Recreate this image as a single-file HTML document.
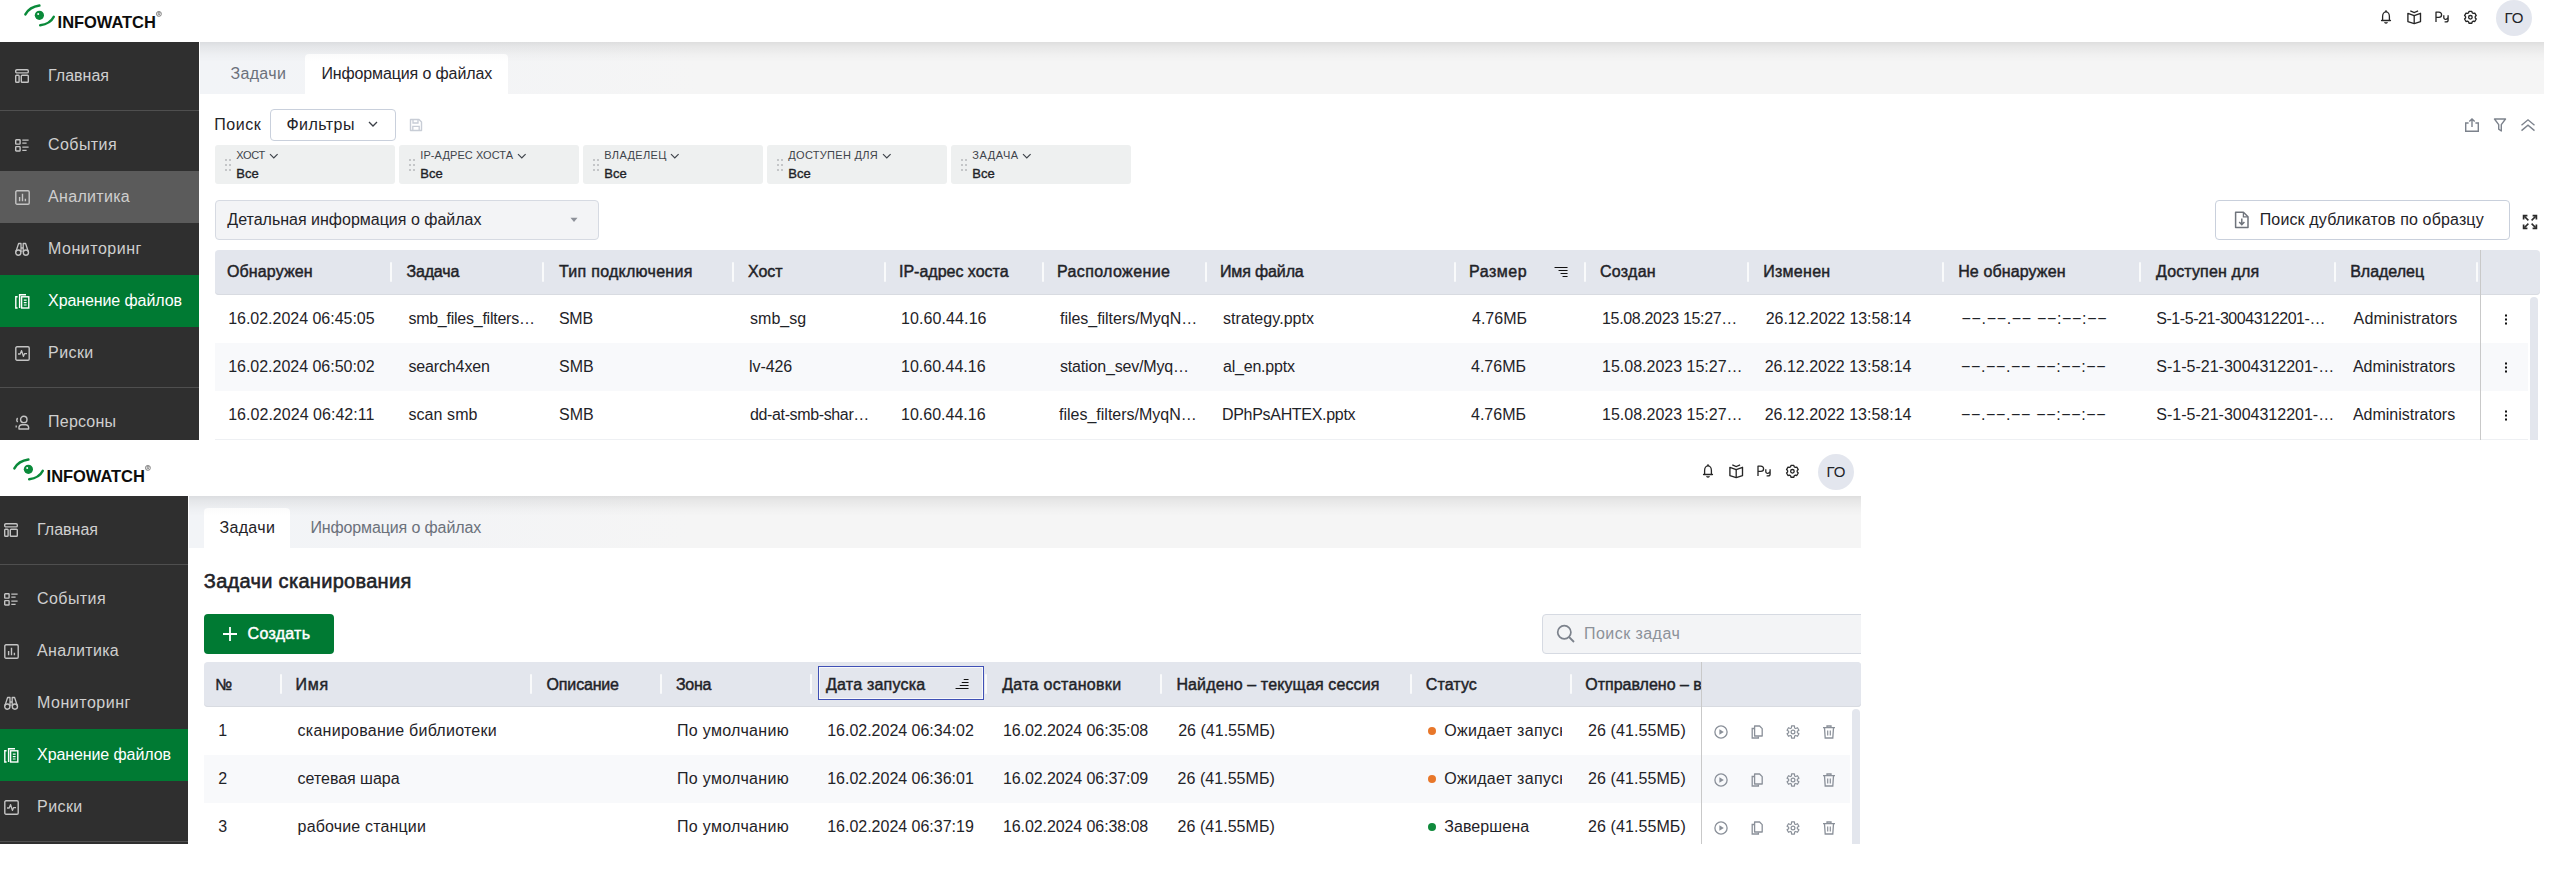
<!DOCTYPE html>
<html><head><meta charset="utf-8"><title>InfoWatch</title>
<style>
html,body{margin:0;padding:0;}
body{width:2549px;height:885px;position:relative;overflow:hidden;background:#fff;font-family:"Liberation Sans", sans-serif;-webkit-font-smoothing:antialiased;}
</style></head><body>
<div style="position:absolute;left:0px;top:0px;width:2544px;height:440px;overflow:hidden;background:#fff;"><div style="position:absolute;left:0px;top:0px;width:2544px;height:42px;background:#fff;"></div><svg style="position:absolute;left:20px;top:0px;" width="150" height="40" viewBox="0 0 150 40"><path d="M5.4 14.4 Q9.6 7 19.4 5.6" stroke="#0a8a3a" stroke-width="2.5" fill="none" stroke-linecap="round"/><circle cx="19.4" cy="15.3" r="4.6" fill="#0a8a3a"/><circle cx="18.2" cy="13.9" r="1.0" fill="#fff"/><path d="M20.2 25.3 Q30.2 24 33.8 16.8" stroke="#0a8a3a" stroke-width="2.5" fill="none" stroke-linecap="round"/><circle cx="138.9" cy="13.9" r="2.5" stroke="#444" stroke-width="0.6" fill="none"/><path d="M138.1 15.5 V12.4 H139.3 A0.8 0.8 0 0 1 139.3 14 H138.1 M139.1 14 L140 15.5" stroke="#444" stroke-width="0.5" fill="none"/></svg><div style="position:absolute;left:57.60px;top:13.93px;font-size:16.5px;line-height:16.5px;white-space:nowrap;color:#0d0d0d;font-weight:700;letter-spacing:-0.05px;">INFOWATCH</div><svg style="position:absolute;left:2379px;top:9px;" width="14" height="16" viewBox="0 0 14 16"><path d="M3.6 11.3 V7.4 C3.6 4.9 5.1 2.9 7 2.9 C8.9 2.9 10.4 4.9 10.4 7.4 V11.3" fill="none" stroke="#262626" stroke-width="1.3"/><path d="M2.6 11.5 H11.4" stroke="#262626" stroke-width="1.4" stroke-linecap="round"/><path d="M6.1 2.6 L7 1.4 L7.9 2.6 Z" fill="#262626" stroke="#262626" stroke-width="0.8"/><path d="M5.3 13.6 H8.7 L7 14.6 Z" fill="#262626" stroke="#262626" stroke-width="0.6" stroke-linejoin="round"/></svg><svg style="position:absolute;left:2407px;top:9px;" width="15" height="16" viewBox="0 0 15 16"><path d="M0.9 4.3 L7.2 6.6 L13.5 4.3 V12.6 L7.2 14.6 L0.9 12.6 Z" fill="none" stroke="#262626" stroke-width="1.35" stroke-linejoin="round"/><path d="M7.2 6.6 V14.4" stroke="#262626" stroke-width="1.3"/><path d="M3.3 1.9 L7.2 3.5 L11.1 1.9" fill="none" stroke="#262626" stroke-width="1.2"/></svg><svg style="position:absolute;left:2435px;top:10px;" width="15" height="14" viewBox="0 0 15 14"><path d="M1 11.9 V2.2 H3.8 C5.6 2.2 6.6 3.2 6.6 4.8 C6.6 6.4 5.6 7.4 3.8 7.4 H1" fill="none" stroke="#262626" stroke-width="1.3" stroke-linejoin="round"/><path d="M8.8 5.2 V7.6 C8.8 9 9.9 9.6 11 9.3 C12.2 9 13.1 8.2 13.1 7 M13.1 5.2 V10.2 C13.1 11.3 12.2 11.9 11 11.9 H9.6" fill="none" stroke="#262626" stroke-width="1.3"/></svg><svg style="position:absolute;left:2462.5px;top:9.5px;" width="15" height="15" viewBox="0 0 15 15"><path d="M5.60 2.74 L5.98 1.37 L8.82 1.37 L9.20 2.74 L9.78 3.18 L10.44 3.46 L11.82 3.10 L13.25 5.57 L12.25 6.58 L12.15 7.30 L12.25 8.02 L13.25 9.03 L11.82 11.50 L10.44 11.14 L9.78 11.42 L9.20 11.86 L8.82 13.23 L5.98 13.23 L5.60 11.86 L5.02 11.42 L4.36 11.14 L2.98 11.50 L1.55 9.03 L2.55 8.02 L2.65 7.30 L2.55 6.58 L1.55 5.57 L2.98 3.10 L4.36 3.46 L5.02 3.18 Z" fill="none" stroke="#262626" stroke-width="1.3" stroke-linejoin="round"/><circle cx="7.4" cy="7.3" r="1.8" fill="none" stroke="#262626" stroke-width="1.3"/></svg><div style="position:absolute;left:2496px;top:-0.5px;width:36px;height:36px;border-radius:50%;background:#e3e6ee;"></div><div style="position:absolute;left:2504.60px;top:10.10px;font-size:15px;line-height:15px;white-space:nowrap;color:#1f2328;">ГО</div><div style="position:absolute;left:0px;top:42px;width:199px;height:398px;background:#2f2f2f;"></div><div style="position:absolute;left:0px;top:110px;width:199px;height:1px;background:#4f4f4f;"></div><div style="position:absolute;left:0px;top:387px;width:199px;height:1px;background:#4f4f4f;"></div><div style="position:absolute;left:0px;top:171px;width:199px;height:52px;background:#5b5b5b;"></div><div style="position:absolute;left:0px;top:275px;width:199px;height:52px;background:#007a33;"></div><svg style="position:absolute;left:15px;top:68.5px;" width="15" height="15" viewBox="0 0 15 15"><rect x="0.7" y="0.7" width="12.6" height="3.2" rx="1.2" fill="none" stroke="#c4c4c4" stroke-width="1.4"/><rect x="0.7" y="6.3" width="3.4" height="7" rx="0.8" fill="none" stroke="#c4c4c4" stroke-width="1.4"/><rect x="6.3" y="6.3" width="7" height="7" rx="0.8" fill="none" stroke="#c4c4c4" stroke-width="1.4"/></svg><div style="position:absolute;left:48.10px;top:67.75px;font-size:16px;line-height:16px;white-space:nowrap;color:#cfcfcf;">Главная</div><svg style="position:absolute;left:15px;top:139px;" width="15" height="15" viewBox="0 0 15 15"><rect x="0.7" y="0.7" width="4.4" height="4.4" rx="0.6" fill="none" stroke="#c4c4c4" stroke-width="1.4"/><rect x="0.7" y="7.6" width="4.4" height="4.4" rx="0.6" fill="none" stroke="#c4c4c4" stroke-width="1.4"/><path d="M7.3 1.2 H13.6 M7.3 4.2 H11.6 M7.3 8.2 H13.6 M7.3 11.4 H11.6" stroke="#c4c4c4" stroke-width="1.3"/></svg><div style="position:absolute;left:48.10px;top:137.25px;font-size:16px;line-height:16px;white-space:nowrap;color:#cfcfcf;letter-spacing:0.4px;">События</div><svg style="position:absolute;left:15px;top:190px;" width="15" height="15" viewBox="0 0 15 15"><rect x="0.8" y="0.8" width="13.4" height="13.4" rx="1.2" fill="none" stroke="#c4c4c4" stroke-width="1.4"/><path d="M4.6 7 V11.3 M7.5 3.8 V11.3 M10.4 8.8 V11.3" stroke="#c4c4c4" stroke-width="1.4"/></svg><div style="position:absolute;left:48.10px;top:189.25px;font-size:16px;line-height:16px;white-space:nowrap;color:#cfcfcf;letter-spacing:0.3px;">Аналитика</div><svg style="position:absolute;left:15px;top:242px;" width="15" height="15" viewBox="0 0 15 15"><circle cx="3.3" cy="10.6" r="2.6" fill="none" stroke="#c4c4c4" stroke-width="1.4"/><circle cx="10.9" cy="10.6" r="2.6" fill="none" stroke="#c4c4c4" stroke-width="1.4"/><path d="M1 9.5 L3.6 1.5 H6 V10 M13.2 9.5 L10.6 1.5 H8.2 V10 M6 6 H8.2" fill="none" stroke="#c4c4c4" stroke-width="1.3" stroke-linejoin="round"/></svg><div style="position:absolute;left:48.10px;top:241.25px;font-size:16px;line-height:16px;white-space:nowrap;color:#cfcfcf;letter-spacing:0.5px;">Мониторинг</div><svg style="position:absolute;left:15px;top:294px;" width="15" height="15" viewBox="0 0 15 15"><path d="M2.6 14 H0.8 V2.8 H2.6" fill="none" stroke="#ffffff" stroke-width="1.4"/><path d="M4.6 14 V0.8 H11" fill="none" stroke="#ffffff" stroke-width="1.4"/><rect x="6.6" y="2.8" width="7.2" height="11.2" fill="none" stroke="#ffffff" stroke-width="1.4"/><path d="M8.8 6.2 H11.6 M8.8 8.6 H11.6 M8.8 11 H11.6" stroke="#ffffff" stroke-width="1.2"/></svg><div style="position:absolute;left:48.10px;top:293.25px;font-size:16px;line-height:16px;white-space:nowrap;color:#ffffff;letter-spacing:-0.1px;">Хранение файлов</div><svg style="position:absolute;left:15px;top:346px;" width="15" height="15" viewBox="0 0 15 15"><rect x="0.8" y="0.8" width="13.4" height="13.4" rx="1.2" fill="none" stroke="#c4c4c4" stroke-width="1.4"/><path d="M3 8 H5.2 L6.6 4.6 L8.4 10.4 L9.6 7.6 H12" fill="none" stroke="#c4c4c4" stroke-width="1.3" stroke-linejoin="round"/></svg><div style="position:absolute;left:48.10px;top:345.25px;font-size:16px;line-height:16px;white-space:nowrap;color:#cfcfcf;letter-spacing:0.4px;">Риски</div><svg style="position:absolute;left:15px;top:415px;" width="15" height="15" viewBox="0 0 15 15"><circle cx="8.8" cy="4.4" r="3.2" fill="none" stroke="#c4c4c4" stroke-width="1.4"/><path d="M4 14 V12.2 A3 3 0 0 1 7 9.8 H10.6 A3 3 0 0 1 13.6 12.2 V14 Z" fill="none" stroke="#c4c4c4" stroke-width="1.4" stroke-linejoin="round"/><path d="M2.6 3 A3.4 3.4 0 0 0 2.6 7.2" fill="none" stroke="#c4c4c4" stroke-width="1.3"/><path d="M1.2 10.6 V12.6" stroke="#c4c4c4" stroke-width="1.3"/></svg><div style="position:absolute;left:48.10px;top:414.25px;font-size:16px;line-height:16px;white-space:nowrap;color:#cfcfcf;letter-spacing:0.2px;">Персоны</div><div style="position:absolute;left:200px;top:42px;width:2344px;height:52px;background:linear-gradient(to right,#f2f4f7 0px,#f3f4f6 250px,#f5f5f5 500px);"></div><div style="position:absolute;left:200px;top:42px;width:2344px;height:20px;background:linear-gradient(to bottom,rgba(0,0,0,0.095),rgba(0,0,0,0.055) 5px,rgba(0,0,0,0.02) 13px,rgba(0,0,0,0));"></div><div style="position:absolute;left:305px;top:54px;width:203px;height:40px;background:linear-gradient(to bottom,#fbfbfb,#fff 8px);border-radius:4px 4px 0 0;"></div><div style="position:absolute;left:230.40px;top:66.45px;font-size:16px;line-height:16px;white-space:nowrap;color:#6b717b;letter-spacing:0.35px;">Задачи</div><div style="position:absolute;left:321.40px;top:66.45px;font-size:16px;line-height:16px;white-space:nowrap;color:#1f2328;letter-spacing:-0.12px;">Информация о файлах</div><div style="position:absolute;left:199px;top:42px;width:1px;height:398px;background:#fff;"></div><div style="position:absolute;left:214.30px;top:116.65px;font-size:16px;line-height:16px;white-space:nowrap;color:#1f2328;letter-spacing:0.55px;">Поиск</div><div style="position:absolute;left:270px;top:109px;width:124px;height:30px;border:1px solid #c9d0dc;border-radius:4px;background:#fff;"></div><div style="position:absolute;left:286.50px;top:116.65px;font-size:16px;line-height:16px;white-space:nowrap;color:#1f2328;letter-spacing:0.45px;">Фильтры</div><svg style="position:absolute;left:368px;top:121px;" width="10" height="7" viewBox="0 0 10 7"><path d="M1 1 L5 5 L9 1" fill="none" stroke="#3a3f46" stroke-width="1.3"/></svg><svg style="position:absolute;left:409px;top:118px;" width="14" height="14" viewBox="0 0 14 14"><path d="M1.5 1.5 H10 L12.5 4 V12.5 H1.5 Z" fill="none" stroke="#c8cdd6" stroke-width="1.4" stroke-linejoin="round"/><path d="M4 1.5 V5 H9 V1.5 M3.8 12.5 V8.4 H10.2 V12.5" fill="none" stroke="#c8cdd6" stroke-width="1.3"/></svg><svg style="position:absolute;left:2464px;top:117px;" width="16" height="16" viewBox="0 0 16 16"><path d="M4.6 6 H1.7 V14.3 H14.3 V6 H11.4" fill="none" stroke="#7c828c" stroke-width="1.4"/><path d="M8 10 V2 M5.3 4.6 L8 1.9 L10.7 4.6" fill="none" stroke="#7c828c" stroke-width="1.4"/></svg><svg style="position:absolute;left:2493px;top:117px;" width="14" height="16" viewBox="0 0 14 16"><path d="M1.5 2 H12.5 L8.3 7.6 V14 L5.7 12.2 V7.6 Z" fill="none" stroke="#7c828c" stroke-width="1.4" stroke-linejoin="round"/></svg><svg style="position:absolute;left:2520px;top:118px;" width="16" height="14" viewBox="0 0 16 14"><path d="M1.5 7.2 L8 1.8 L14.5 7.2 M1.5 12.6 L8 7.2 L14.5 12.6" fill="none" stroke="#7c828c" stroke-width="1.4"/></svg><div style="position:absolute;left:215px;top:145px;width:180px;height:39px;background:#eef0f0;border-radius:3px;"></div><svg style="position:absolute;left:225px;top:159px;" width="6" height="12" viewBox="0 0 6 12"><rect x="0" y="0" width="2" height="2" fill="#c4c6c8"/><rect x="0" y="5" width="2" height="2" fill="#c4c6c8"/><rect x="0" y="10" width="2" height="2" fill="#c4c6c8"/><rect x="4" y="0" width="2" height="2" fill="#c4c6c8"/><rect x="4" y="5" width="2" height="2" fill="#c4c6c8"/><rect x="4" y="10" width="2" height="2" fill="#c4c6c8"/></svg><div style="position:absolute;left:236.3px;top:149.69px;font-size:11px;line-height:11px;white-space:nowrap;color:#3f444b;letter-spacing:-0.27px;">ХОСТ<svg style="margin-left:4.27px;vertical-align:-1px" width="10" height="7" viewBox="0 0 10 7"><path d="M1 1.2 L4.8 5 L8.6 1.2" fill="none" stroke="#3f444b" stroke-width="1.2"/></svg></div><div style="position:absolute;left:236.30px;top:166.99px;font-size:13px;line-height:13px;white-space:nowrap;color:#1f2328;-webkit-text-stroke:0.36px #1f2328;">Все</div><div style="position:absolute;left:399px;top:145px;width:180px;height:39px;background:#eef0f0;border-radius:3px;"></div><svg style="position:absolute;left:409px;top:159px;" width="6" height="12" viewBox="0 0 6 12"><rect x="0" y="0" width="2" height="2" fill="#c4c6c8"/><rect x="0" y="5" width="2" height="2" fill="#c4c6c8"/><rect x="0" y="10" width="2" height="2" fill="#c4c6c8"/><rect x="4" y="0" width="2" height="2" fill="#c4c6c8"/><rect x="4" y="5" width="2" height="2" fill="#c4c6c8"/><rect x="4" y="10" width="2" height="2" fill="#c4c6c8"/></svg><div style="position:absolute;left:420.3px;top:149.69px;font-size:11px;line-height:11px;white-space:nowrap;color:#3f444b;letter-spacing:0.09px;">IP-АДРЕС ХОСТА<svg style="margin-left:3.91px;vertical-align:-1px" width="10" height="7" viewBox="0 0 10 7"><path d="M1 1.2 L4.8 5 L8.6 1.2" fill="none" stroke="#3f444b" stroke-width="1.2"/></svg></div><div style="position:absolute;left:420.30px;top:166.99px;font-size:13px;line-height:13px;white-space:nowrap;color:#1f2328;-webkit-text-stroke:0.36px #1f2328;">Все</div><div style="position:absolute;left:583px;top:145px;width:180px;height:39px;background:#eef0f0;border-radius:3px;"></div><svg style="position:absolute;left:593px;top:159px;" width="6" height="12" viewBox="0 0 6 12"><rect x="0" y="0" width="2" height="2" fill="#c4c6c8"/><rect x="0" y="5" width="2" height="2" fill="#c4c6c8"/><rect x="0" y="10" width="2" height="2" fill="#c4c6c8"/><rect x="4" y="0" width="2" height="2" fill="#c4c6c8"/><rect x="4" y="5" width="2" height="2" fill="#c4c6c8"/><rect x="4" y="10" width="2" height="2" fill="#c4c6c8"/></svg><div style="position:absolute;left:604.3px;top:149.69px;font-size:11px;line-height:11px;white-space:nowrap;color:#3f444b;letter-spacing:0.36px;">ВЛАДЕЛЕЦ<svg style="margin-left:3.64px;vertical-align:-1px" width="10" height="7" viewBox="0 0 10 7"><path d="M1 1.2 L4.8 5 L8.6 1.2" fill="none" stroke="#3f444b" stroke-width="1.2"/></svg></div><div style="position:absolute;left:604.30px;top:166.99px;font-size:13px;line-height:13px;white-space:nowrap;color:#1f2328;-webkit-text-stroke:0.36px #1f2328;">Все</div><div style="position:absolute;left:767px;top:145px;width:180px;height:39px;background:#eef0f0;border-radius:3px;"></div><svg style="position:absolute;left:777px;top:159px;" width="6" height="12" viewBox="0 0 6 12"><rect x="0" y="0" width="2" height="2" fill="#c4c6c8"/><rect x="0" y="5" width="2" height="2" fill="#c4c6c8"/><rect x="0" y="10" width="2" height="2" fill="#c4c6c8"/><rect x="4" y="0" width="2" height="2" fill="#c4c6c8"/><rect x="4" y="5" width="2" height="2" fill="#c4c6c8"/><rect x="4" y="10" width="2" height="2" fill="#c4c6c8"/></svg><div style="position:absolute;left:788.3px;top:149.69px;font-size:11px;line-height:11px;white-space:nowrap;color:#3f444b;letter-spacing:0.3px;">ДОСТУПЕН ДЛЯ<svg style="margin-left:3.70px;vertical-align:-1px" width="10" height="7" viewBox="0 0 10 7"><path d="M1 1.2 L4.8 5 L8.6 1.2" fill="none" stroke="#3f444b" stroke-width="1.2"/></svg></div><div style="position:absolute;left:788.30px;top:166.99px;font-size:13px;line-height:13px;white-space:nowrap;color:#1f2328;-webkit-text-stroke:0.36px #1f2328;">Все</div><div style="position:absolute;left:951px;top:145px;width:180px;height:39px;background:#eef0f0;border-radius:3px;"></div><svg style="position:absolute;left:961px;top:159px;" width="6" height="12" viewBox="0 0 6 12"><rect x="0" y="0" width="2" height="2" fill="#c4c6c8"/><rect x="0" y="5" width="2" height="2" fill="#c4c6c8"/><rect x="0" y="10" width="2" height="2" fill="#c4c6c8"/><rect x="4" y="0" width="2" height="2" fill="#c4c6c8"/><rect x="4" y="5" width="2" height="2" fill="#c4c6c8"/><rect x="4" y="10" width="2" height="2" fill="#c4c6c8"/></svg><div style="position:absolute;left:972.3px;top:149.69px;font-size:11px;line-height:11px;white-space:nowrap;color:#3f444b;letter-spacing:0.58px;">ЗАДАЧА<svg style="margin-left:3.42px;vertical-align:-1px" width="10" height="7" viewBox="0 0 10 7"><path d="M1 1.2 L4.8 5 L8.6 1.2" fill="none" stroke="#3f444b" stroke-width="1.2"/></svg></div><div style="position:absolute;left:972.30px;top:166.99px;font-size:13px;line-height:13px;white-space:nowrap;color:#1f2328;-webkit-text-stroke:0.36px #1f2328;">Все</div><div style="position:absolute;left:215px;top:200px;width:382px;height:38px;background:#f3f4f6;border:1px solid #d6dae2;border-radius:4px;"></div><div style="position:absolute;left:227.30px;top:212.45px;font-size:16px;line-height:16px;white-space:nowrap;color:#1f2328;">Детальная информация о файлах</div><svg style="position:absolute;left:570px;top:217px;" width="8" height="6" viewBox="0 0 8 6"><path d="M0.5 0.8 H7.5 L4 5 Z" fill="#8d9199"/></svg><div style="position:absolute;left:2215px;top:200px;width:293px;height:38px;border:1px solid #c9d0dc;border-radius:4px;background:#fff;"></div><svg style="position:absolute;left:2234px;top:211px;" width="16" height="18" viewBox="0 0 16 18"><path d="M1.6 1.2 H9.4 L14 5.8 V16.6 H1.6 Z" fill="none" stroke="#6f747c" stroke-width="1.5" stroke-linejoin="round"/><path d="M9.4 1.2 V5.8 H14" fill="none" stroke="#6f747c" stroke-width="1.3"/><path d="M7.8 7.5 V13.5 M5.2 11 L7.8 13.6 L10.4 11" fill="none" stroke="#6f747c" stroke-width="1.5"/></svg><div style="position:absolute;left:2259.70px;top:212.45px;font-size:16px;line-height:16px;white-space:nowrap;color:#1f2328;letter-spacing:0.15px;">Поиск дубликатов по образцу</div><svg style="position:absolute;left:2522px;top:214px;" width="16" height="16" viewBox="0 0 16 16"><path d="M1.6 5.4 V1.6 H5.4 M10.6 1.6 H14.4 V5.4 M14.4 10.6 V14.4 H10.6 M5.4 14.4 H1.6 V10.6" fill="none" stroke="#2b2b2b" stroke-width="1.7" stroke-linejoin="miter"/><path d="M2.4 2.4 L6.4 6.4 M13.6 2.4 L9.6 6.4 M13.6 13.6 L9.6 9.6 M2.4 13.6 L6.4 9.6" stroke="#2b2b2b" stroke-width="1.5"/></svg><div style="position:absolute;left:215px;top:250px;width:2325px;height:45px;background:#e3e6ed;border-radius:4px;box-shadow:inset 0 -1px 0 #d8dbe1;"></div><div style="position:absolute;left:390px;top:262px;width:2px;height:20px;background:#f9fafb;border-radius:1px;"></div><div style="position:absolute;left:542px;top:262px;width:2px;height:20px;background:#f9fafb;border-radius:1px;"></div><div style="position:absolute;left:732px;top:262px;width:2px;height:20px;background:#f9fafb;border-radius:1px;"></div><div style="position:absolute;left:884px;top:262px;width:2px;height:20px;background:#f9fafb;border-radius:1px;"></div><div style="position:absolute;left:1042px;top:262px;width:2px;height:20px;background:#f9fafb;border-radius:1px;"></div><div style="position:absolute;left:1205px;top:262px;width:2px;height:20px;background:#f9fafb;border-radius:1px;"></div><div style="position:absolute;left:1454px;top:262px;width:2px;height:20px;background:#f9fafb;border-radius:1px;"></div><div style="position:absolute;left:1584px;top:262px;width:2px;height:20px;background:#f9fafb;border-radius:1px;"></div><div style="position:absolute;left:1747px;top:262px;width:2px;height:20px;background:#f9fafb;border-radius:1px;"></div><div style="position:absolute;left:1942px;top:262px;width:2px;height:20px;background:#f9fafb;border-radius:1px;"></div><div style="position:absolute;left:2139px;top:262px;width:2px;height:20px;background:#f9fafb;border-radius:1px;"></div><div style="position:absolute;left:2334px;top:262px;width:2px;height:20px;background:#f9fafb;border-radius:1px;"></div><div style="position:absolute;left:2476px;top:262px;width:2px;height:20px;background:#f9fafb;border-radius:1px;"></div><div style="position:absolute;left:227.00px;top:263.75px;font-size:16px;line-height:16px;white-space:nowrap;color:#1f2328;-webkit-text-stroke:0.45px #1f2328;letter-spacing:0.114px;">Обнаружен</div><div style="position:absolute;left:406.40px;top:263.75px;font-size:16px;line-height:16px;white-space:nowrap;color:#1f2328;-webkit-text-stroke:0.45px #1f2328;letter-spacing:-0.14px;">Задача</div><div style="position:absolute;left:559.00px;top:263.75px;font-size:16px;line-height:16px;white-space:nowrap;color:#1f2328;-webkit-text-stroke:0.45px #1f2328;letter-spacing:0.271px;">Тип подключения</div><div style="position:absolute;left:748.00px;top:263.75px;font-size:16px;line-height:16px;white-space:nowrap;color:#1f2328;-webkit-text-stroke:0.45px #1f2328;letter-spacing:-0.066px;">Хост</div><div style="position:absolute;left:899.00px;top:263.75px;font-size:16px;line-height:16px;white-space:nowrap;color:#1f2328;-webkit-text-stroke:0.45px #1f2328;letter-spacing:-0.008px;">IP-адрес хоста</div><div style="position:absolute;left:1057.00px;top:263.75px;font-size:16px;line-height:16px;white-space:nowrap;color:#1f2328;-webkit-text-stroke:0.45px #1f2328;letter-spacing:0.373px;">Расположение</div><div style="position:absolute;left:1220.00px;top:263.75px;font-size:16px;line-height:16px;white-space:nowrap;color:#1f2328;-webkit-text-stroke:0.45px #1f2328;letter-spacing:-0.139px;">Имя файла</div><div style="position:absolute;left:1469.00px;top:263.75px;font-size:16px;line-height:16px;white-space:nowrap;color:#1f2328;-webkit-text-stroke:0.45px #1f2328;letter-spacing:0.52px;">Размер</div><div style="position:absolute;left:1600.00px;top:263.75px;font-size:16px;line-height:16px;white-space:nowrap;color:#1f2328;-webkit-text-stroke:0.45px #1f2328;letter-spacing:0.26px;">Создан</div><div style="position:absolute;left:1763.20px;top:263.75px;font-size:16px;line-height:16px;white-space:nowrap;color:#1f2328;-webkit-text-stroke:0.45px #1f2328;letter-spacing:0.283px;">Изменен</div><div style="position:absolute;left:1958.20px;top:263.75px;font-size:16px;line-height:16px;white-space:nowrap;color:#1f2328;-webkit-text-stroke:0.45px #1f2328;letter-spacing:0.118px;">Не обнаружен</div><div style="position:absolute;left:2156.00px;top:263.75px;font-size:16px;line-height:16px;white-space:nowrap;color:#1f2328;-webkit-text-stroke:0.45px #1f2328;letter-spacing:0.136px;">Доступен для</div><div style="position:absolute;left:2350.20px;top:263.75px;font-size:16px;line-height:16px;white-space:nowrap;color:#1f2328;-webkit-text-stroke:0.45px #1f2328;letter-spacing:-0.014px;">Владелец</div><svg style="position:absolute;left:1554px;top:266px;" width="14" height="12" viewBox="0 0 14 12"><path d="M1 1.5 H13.1 M5 4.5 H13.1 M7 7.5 H13.1 M9 10.5 H13.1" stroke="#111" stroke-width="1.2" stroke-linecap="round"/></svg><div style="position:absolute;left:215px;top:343px;width:2313px;height:48px;background:#f8f9fb;"></div><div style="position:absolute;left:215px;top:439px;width:2313px;height:1px;background:#eef0f3;"></div><div style="position:absolute;left:228.20px;top:310.85px;font-size:16px;line-height:16px;white-space:nowrap;color:#1f2328;letter-spacing:-0.022px;">16.02.2024 06:45:05</div><div style="position:absolute;left:408.40px;top:310.85px;font-size:16px;line-height:16px;white-space:nowrap;color:#1f2328;letter-spacing:-0.248px;">smb_files_filters…</div><div style="position:absolute;left:559.00px;top:310.85px;font-size:16px;line-height:16px;white-space:nowrap;color:#1f2328;letter-spacing:-0.3px;">SMB</div><div style="position:absolute;left:750.00px;top:310.85px;font-size:16px;line-height:16px;white-space:nowrap;color:#1f2328;letter-spacing:0.04px;">smb_sg</div><div style="position:absolute;left:901.00px;top:310.85px;font-size:16px;line-height:16px;white-space:nowrap;color:#1f2328;letter-spacing:0.1px;">10.60.44.16</div><div style="position:absolute;left:1060.00px;top:310.85px;font-size:16px;line-height:16px;white-space:nowrap;color:#1f2328;letter-spacing:-0.033px;">files_filters/MyqN…</div><div style="position:absolute;left:1223.00px;top:310.85px;font-size:16px;line-height:16px;white-space:nowrap;color:#1f2328;letter-spacing:0.051px;">strategy.pptx</div><div style="position:absolute;left:1472.00px;top:310.85px;font-size:16px;line-height:16px;white-space:nowrap;color:#1f2328;">4.76МБ</div><div style="position:absolute;left:1602.00px;top:310.85px;font-size:16px;line-height:16px;white-space:nowrap;color:#1f2328;letter-spacing:-0.331px;">15.08.2023 15:27…</div><div style="position:absolute;left:1765.80px;top:310.85px;font-size:16px;line-height:16px;white-space:nowrap;color:#1f2328;letter-spacing:-0.077px;">26.12.2022 13:58:14</div><div style="position:absolute;left:1961.60px;top:310.85px;font-size:16px;line-height:16px;white-space:nowrap;color:#1f2328;letter-spacing:0.663px;">−−.−−.−− −−:−−:−−</div><div style="position:absolute;left:2156.20px;top:310.85px;font-size:16px;line-height:16px;white-space:nowrap;color:#1f2328;letter-spacing:-0.43px;">S-1-5-21-3004312201-…</div><div style="position:absolute;left:2353.60px;top:310.85px;font-size:16px;line-height:16px;white-space:nowrap;color:#1f2328;letter-spacing:0.115px;">Administrators</div><svg style="position:absolute;left:2504px;top:314px;" width="4" height="12" viewBox="0 0 4 12"><rect x="1" y="0.5" width="2" height="2" fill="#111"/><rect x="1" y="4.5" width="2" height="2" fill="#111"/><rect x="1" y="8.5" width="2" height="2" fill="#111"/></svg><div style="position:absolute;left:228.20px;top:358.85px;font-size:16px;line-height:16px;white-space:nowrap;color:#1f2328;letter-spacing:-0.022px;">16.02.2024 06:50:02</div><div style="position:absolute;left:408.40px;top:358.85px;font-size:16px;line-height:16px;white-space:nowrap;color:#1f2328;letter-spacing:-0.133px;">search4xen</div><div style="position:absolute;left:559.00px;top:358.85px;font-size:16px;line-height:16px;white-space:nowrap;color:#1f2328;">SMB</div><div style="position:absolute;left:749.00px;top:358.85px;font-size:16px;line-height:16px;white-space:nowrap;color:#1f2328;letter-spacing:-0.08px;">lv-426</div><div style="position:absolute;left:901.00px;top:358.85px;font-size:16px;line-height:16px;white-space:nowrap;color:#1f2328;">10.60.44.16</div><div style="position:absolute;left:1060.00px;top:358.85px;font-size:16px;line-height:16px;white-space:nowrap;color:#1f2328;letter-spacing:-0.173px;">station_sev/Myq…</div><div style="position:absolute;left:1223.00px;top:358.85px;font-size:16px;line-height:16px;white-space:nowrap;color:#1f2328;letter-spacing:-0.211px;">al_en.pptx</div><div style="position:absolute;left:1471.00px;top:358.85px;font-size:16px;line-height:16px;white-space:nowrap;color:#1f2328;">4.76МБ</div><div style="position:absolute;left:1602.00px;top:358.85px;font-size:16px;line-height:16px;white-space:nowrap;color:#1f2328;">15.08.2023 15:27…</div><div style="position:absolute;left:1764.70px;top:358.85px;font-size:16px;line-height:16px;white-space:nowrap;color:#1f2328;">26.12.2022 13:58:14</div><div style="position:absolute;left:1960.90px;top:358.85px;font-size:16px;line-height:16px;white-space:nowrap;color:#1f2328;letter-spacing:0.65px;">−−.−−.−− −−:−−:−−</div><div style="position:absolute;left:2156.30px;top:358.85px;font-size:16px;line-height:16px;white-space:nowrap;color:#1f2328;">S-1-5-21-3004312201-…</div><div style="position:absolute;left:2352.90px;top:358.85px;font-size:16px;line-height:16px;white-space:nowrap;color:#1f2328;">Administrators</div><svg style="position:absolute;left:2504px;top:362px;" width="4" height="12" viewBox="0 0 4 12"><rect x="1" y="0.5" width="2" height="2" fill="#111"/><rect x="1" y="4.5" width="2" height="2" fill="#111"/><rect x="1" y="8.5" width="2" height="2" fill="#111"/></svg><div style="position:absolute;left:228.20px;top:406.85px;font-size:16px;line-height:16px;white-space:nowrap;color:#1f2328;letter-spacing:0.033px;">16.02.2024 06:42:11</div><div style="position:absolute;left:408.40px;top:406.85px;font-size:16px;line-height:16px;white-space:nowrap;color:#1f2328;letter-spacing:0.087px;">scan smb</div><div style="position:absolute;left:559.00px;top:406.85px;font-size:16px;line-height:16px;white-space:nowrap;color:#1f2328;">SMB</div><div style="position:absolute;left:750.00px;top:406.85px;font-size:16px;line-height:16px;white-space:nowrap;color:#1f2328;letter-spacing:-0.365px;">dd-at-smb-shar…</div><div style="position:absolute;left:901.00px;top:406.85px;font-size:16px;line-height:16px;white-space:nowrap;color:#1f2328;">10.60.44.16</div><div style="position:absolute;left:1059.00px;top:406.85px;font-size:16px;line-height:16px;white-space:nowrap;color:#1f2328;">files_filters/MyqN…</div><div style="position:absolute;left:1222.00px;top:406.85px;font-size:16px;line-height:16px;white-space:nowrap;color:#1f2328;letter-spacing:-0.307px;">DPhPsAHTEX.pptx</div><div style="position:absolute;left:1471.00px;top:406.85px;font-size:16px;line-height:16px;white-space:nowrap;color:#1f2328;">4.76МБ</div><div style="position:absolute;left:1602.00px;top:406.85px;font-size:16px;line-height:16px;white-space:nowrap;color:#1f2328;">15.08.2023 15:27…</div><div style="position:absolute;left:1764.70px;top:406.85px;font-size:16px;line-height:16px;white-space:nowrap;color:#1f2328;">26.12.2022 13:58:14</div><div style="position:absolute;left:1960.90px;top:406.85px;font-size:16px;line-height:16px;white-space:nowrap;color:#1f2328;letter-spacing:0.65px;">−−.−−.−− −−:−−:−−</div><div style="position:absolute;left:2156.30px;top:406.85px;font-size:16px;line-height:16px;white-space:nowrap;color:#1f2328;">S-1-5-21-3004312201-…</div><div style="position:absolute;left:2352.90px;top:406.85px;font-size:16px;line-height:16px;white-space:nowrap;color:#1f2328;">Administrators</div><svg style="position:absolute;left:2504px;top:410px;" width="4" height="12" viewBox="0 0 4 12"><rect x="1" y="0.5" width="2" height="2" fill="#111"/><rect x="1" y="4.5" width="2" height="2" fill="#111"/><rect x="1" y="8.5" width="2" height="2" fill="#111"/></svg><div style="position:absolute;left:2480px;top:250px;width:1px;height:190px;background:#c9c9c9;"></div><div style="position:absolute;left:2530px;top:297px;width:8px;height:150px;background:#e3e6ed;border-radius:4px;"></div></div><div style="position:absolute;left:-11px;top:454px;width:1872px;height:390px;overflow:hidden;background:#fff;"><div style="position:absolute;left:0px;top:0px;width:1872px;height:42px;background:#fff;"></div><svg style="position:absolute;left:20px;top:0px;" width="150" height="40" viewBox="0 0 150 40"><path d="M5.4 14.4 Q9.6 7 19.4 5.6" stroke="#0a8a3a" stroke-width="2.5" fill="none" stroke-linecap="round"/><circle cx="19.4" cy="15.3" r="4.6" fill="#0a8a3a"/><circle cx="18.2" cy="13.9" r="1.0" fill="#fff"/><path d="M20.2 25.3 Q30.2 24 33.8 16.8" stroke="#0a8a3a" stroke-width="2.5" fill="none" stroke-linecap="round"/><circle cx="138.9" cy="13.9" r="2.5" stroke="#444" stroke-width="0.6" fill="none"/><path d="M138.1 15.5 V12.4 H139.3 A0.8 0.8 0 0 1 139.3 14 H138.1 M139.1 14 L140 15.5" stroke="#444" stroke-width="0.5" fill="none"/></svg><div style="position:absolute;left:57.60px;top:13.93px;font-size:16.5px;line-height:16.5px;white-space:nowrap;color:#0d0d0d;font-weight:700;letter-spacing:-0.05px;">INFOWATCH</div><svg style="position:absolute;left:1712px;top:9px;" width="14" height="16" viewBox="0 0 14 16"><path d="M3.6 11.3 V7.4 C3.6 4.9 5.1 2.9 7 2.9 C8.9 2.9 10.4 4.9 10.4 7.4 V11.3" fill="none" stroke="#262626" stroke-width="1.3"/><path d="M2.6 11.5 H11.4" stroke="#262626" stroke-width="1.4" stroke-linecap="round"/><path d="M6.1 2.6 L7 1.4 L7.9 2.6 Z" fill="#262626" stroke="#262626" stroke-width="0.8"/><path d="M5.3 13.6 H8.7 L7 14.6 Z" fill="#262626" stroke="#262626" stroke-width="0.6" stroke-linejoin="round"/></svg><svg style="position:absolute;left:1740px;top:9px;" width="15" height="16" viewBox="0 0 15 16"><path d="M0.9 4.3 L7.2 6.6 L13.5 4.3 V12.6 L7.2 14.6 L0.9 12.6 Z" fill="none" stroke="#262626" stroke-width="1.35" stroke-linejoin="round"/><path d="M7.2 6.6 V14.4" stroke="#262626" stroke-width="1.3"/><path d="M3.3 1.9 L7.2 3.5 L11.1 1.9" fill="none" stroke="#262626" stroke-width="1.2"/></svg><svg style="position:absolute;left:1768px;top:10px;" width="15" height="14" viewBox="0 0 15 14"><path d="M1 11.9 V2.2 H3.8 C5.6 2.2 6.6 3.2 6.6 4.8 C6.6 6.4 5.6 7.4 3.8 7.4 H1" fill="none" stroke="#262626" stroke-width="1.3" stroke-linejoin="round"/><path d="M8.8 5.2 V7.6 C8.8 9 9.9 9.6 11 9.3 C12.2 9 13.1 8.2 13.1 7 M13.1 5.2 V10.2 C13.1 11.3 12.2 11.9 11 11.9 H9.6" fill="none" stroke="#262626" stroke-width="1.3"/></svg><svg style="position:absolute;left:1795.5px;top:9.5px;" width="15" height="15" viewBox="0 0 15 15"><path d="M5.60 2.74 L5.98 1.37 L8.82 1.37 L9.20 2.74 L9.78 3.18 L10.44 3.46 L11.82 3.10 L13.25 5.57 L12.25 6.58 L12.15 7.30 L12.25 8.02 L13.25 9.03 L11.82 11.50 L10.44 11.14 L9.78 11.42 L9.20 11.86 L8.82 13.23 L5.98 13.23 L5.60 11.86 L5.02 11.42 L4.36 11.14 L2.98 11.50 L1.55 9.03 L2.55 8.02 L2.65 7.30 L2.55 6.58 L1.55 5.57 L2.98 3.10 L4.36 3.46 L5.02 3.18 Z" fill="none" stroke="#262626" stroke-width="1.3" stroke-linejoin="round"/><circle cx="7.4" cy="7.3" r="1.8" fill="none" stroke="#262626" stroke-width="1.3"/></svg><div style="position:absolute;left:1829px;top:-0.5px;width:36px;height:36px;border-radius:50%;background:#e3e6ee;"></div><div style="position:absolute;left:1837.60px;top:10.10px;font-size:15px;line-height:15px;white-space:nowrap;color:#1f2328;">ГО</div><div style="position:absolute;left:0px;top:42px;width:199px;height:348px;background:#2f2f2f;"></div><div style="position:absolute;left:0px;top:110px;width:199px;height:1px;background:#4f4f4f;"></div><div style="position:absolute;left:0px;top:387px;width:199px;height:1px;background:#4f4f4f;"></div><div style="position:absolute;left:0px;top:275px;width:199px;height:52px;background:#007a33;"></div><svg style="position:absolute;left:15px;top:68.5px;" width="15" height="15" viewBox="0 0 15 15"><rect x="0.7" y="0.7" width="12.6" height="3.2" rx="1.2" fill="none" stroke="#c4c4c4" stroke-width="1.4"/><rect x="0.7" y="6.3" width="3.4" height="7" rx="0.8" fill="none" stroke="#c4c4c4" stroke-width="1.4"/><rect x="6.3" y="6.3" width="7" height="7" rx="0.8" fill="none" stroke="#c4c4c4" stroke-width="1.4"/></svg><div style="position:absolute;left:48.10px;top:67.75px;font-size:16px;line-height:16px;white-space:nowrap;color:#cfcfcf;">Главная</div><svg style="position:absolute;left:15px;top:139px;" width="15" height="15" viewBox="0 0 15 15"><rect x="0.7" y="0.7" width="4.4" height="4.4" rx="0.6" fill="none" stroke="#c4c4c4" stroke-width="1.4"/><rect x="0.7" y="7.6" width="4.4" height="4.4" rx="0.6" fill="none" stroke="#c4c4c4" stroke-width="1.4"/><path d="M7.3 1.2 H13.6 M7.3 4.2 H11.6 M7.3 8.2 H13.6 M7.3 11.4 H11.6" stroke="#c4c4c4" stroke-width="1.3"/></svg><div style="position:absolute;left:48.10px;top:137.25px;font-size:16px;line-height:16px;white-space:nowrap;color:#cfcfcf;letter-spacing:0.4px;">События</div><svg style="position:absolute;left:15px;top:190px;" width="15" height="15" viewBox="0 0 15 15"><rect x="0.8" y="0.8" width="13.4" height="13.4" rx="1.2" fill="none" stroke="#c4c4c4" stroke-width="1.4"/><path d="M4.6 7 V11.3 M7.5 3.8 V11.3 M10.4 8.8 V11.3" stroke="#c4c4c4" stroke-width="1.4"/></svg><div style="position:absolute;left:48.10px;top:189.25px;font-size:16px;line-height:16px;white-space:nowrap;color:#cfcfcf;letter-spacing:0.3px;">Аналитика</div><svg style="position:absolute;left:15px;top:242px;" width="15" height="15" viewBox="0 0 15 15"><circle cx="3.3" cy="10.6" r="2.6" fill="none" stroke="#c4c4c4" stroke-width="1.4"/><circle cx="10.9" cy="10.6" r="2.6" fill="none" stroke="#c4c4c4" stroke-width="1.4"/><path d="M1 9.5 L3.6 1.5 H6 V10 M13.2 9.5 L10.6 1.5 H8.2 V10 M6 6 H8.2" fill="none" stroke="#c4c4c4" stroke-width="1.3" stroke-linejoin="round"/></svg><div style="position:absolute;left:48.10px;top:241.25px;font-size:16px;line-height:16px;white-space:nowrap;color:#cfcfcf;letter-spacing:0.5px;">Мониторинг</div><svg style="position:absolute;left:15px;top:294px;" width="15" height="15" viewBox="0 0 15 15"><path d="M2.6 14 H0.8 V2.8 H2.6" fill="none" stroke="#ffffff" stroke-width="1.4"/><path d="M4.6 14 V0.8 H11" fill="none" stroke="#ffffff" stroke-width="1.4"/><rect x="6.6" y="2.8" width="7.2" height="11.2" fill="none" stroke="#ffffff" stroke-width="1.4"/><path d="M8.8 6.2 H11.6 M8.8 8.6 H11.6 M8.8 11 H11.6" stroke="#ffffff" stroke-width="1.2"/></svg><div style="position:absolute;left:48.10px;top:293.25px;font-size:16px;line-height:16px;white-space:nowrap;color:#ffffff;letter-spacing:-0.1px;">Хранение файлов</div><svg style="position:absolute;left:15px;top:346px;" width="15" height="15" viewBox="0 0 15 15"><rect x="0.8" y="0.8" width="13.4" height="13.4" rx="1.2" fill="none" stroke="#c4c4c4" stroke-width="1.4"/><path d="M3 8 H5.2 L6.6 4.6 L8.4 10.4 L9.6 7.6 H12" fill="none" stroke="#c4c4c4" stroke-width="1.3" stroke-linejoin="round"/></svg><div style="position:absolute;left:48.10px;top:345.25px;font-size:16px;line-height:16px;white-space:nowrap;color:#cfcfcf;letter-spacing:0.4px;">Риски</div><svg style="position:absolute;left:15px;top:415px;" width="15" height="15" viewBox="0 0 15 15"><circle cx="8.8" cy="4.4" r="3.2" fill="none" stroke="#c4c4c4" stroke-width="1.4"/><path d="M4 14 V12.2 A3 3 0 0 1 7 9.8 H10.6 A3 3 0 0 1 13.6 12.2 V14 Z" fill="none" stroke="#c4c4c4" stroke-width="1.4" stroke-linejoin="round"/><path d="M2.6 3 A3.4 3.4 0 0 0 2.6 7.2" fill="none" stroke="#c4c4c4" stroke-width="1.3"/><path d="M1.2 10.6 V12.6" stroke="#c4c4c4" stroke-width="1.3"/></svg><div style="position:absolute;left:48.10px;top:414.25px;font-size:16px;line-height:16px;white-space:nowrap;color:#cfcfcf;letter-spacing:0.2px;">Персоны</div><div style="position:absolute;left:200px;top:42px;width:1672px;height:52px;background:linear-gradient(to right,#f2f4f7 0px,#f3f4f6 250px,#f5f5f5 500px);"></div><div style="position:absolute;left:200px;top:42px;width:1672px;height:20px;background:linear-gradient(to bottom,rgba(0,0,0,0.095),rgba(0,0,0,0.055) 5px,rgba(0,0,0,0.02) 13px,rgba(0,0,0,0));"></div><div style="position:absolute;left:215px;top:54px;width:86px;height:40px;background:linear-gradient(to bottom,#fbfbfb,#fff 8px);border-radius:4px 4px 0 0;"></div><div style="position:absolute;left:230.40px;top:66.45px;font-size:16px;line-height:16px;white-space:nowrap;color:#1f2328;letter-spacing:0.35px;">Задачи</div><div style="position:absolute;left:321.40px;top:66.45px;font-size:16px;line-height:16px;white-space:nowrap;color:#6b717b;letter-spacing:-0.12px;">Информация о файлах</div><div style="position:absolute;left:199px;top:42px;width:1px;height:348px;background:#fff;"></div><div style="position:absolute;left:214.80px;top:117.37px;font-size:20px;line-height:20px;white-space:nowrap;color:#1f2328;-webkit-text-stroke:0.56px #1f2328;letter-spacing:0.3px;">Задачи сканирования</div><div style="position:absolute;left:215px;top:160px;width:130px;height:40px;background:#007a33;border-radius:4px;"></div><svg style="position:absolute;left:233px;top:172px;" width="16" height="16" viewBox="0 0 16 16"><path d="M8 1 V15 M1 8 H15" stroke="#fff" stroke-width="1.8"/></svg><div style="position:absolute;left:258.60px;top:172.15px;font-size:16px;line-height:16px;white-space:nowrap;color:#fff;-webkit-text-stroke:0.45px #fff;letter-spacing:0.267px;">Создать</div><div style="position:absolute;left:1553px;top:160px;width:400px;height:38px;background:#f3f4f6;border:1px solid #d6dae2;border-radius:4px;"></div><svg style="position:absolute;left:1567px;top:170px;" width="20" height="20" viewBox="0 0 20 20"><circle cx="8.3" cy="8.3" r="6.6" fill="none" stroke="#7c828c" stroke-width="1.7"/><path d="M13 13 L18 18" stroke="#7c828c" stroke-width="1.8"/></svg><div style="position:absolute;left:1595.00px;top:171.95px;font-size:16px;line-height:16px;white-space:nowrap;color:#8c9199;letter-spacing:0.45px;">Поиск задач</div><div style="position:absolute;left:215px;top:208px;width:1657px;height:45px;background:#e3e6ed;border-radius:4px;box-shadow:inset 0 -1px 0 #d8dbe1;"></div><div style="position:absolute;left:291px;top:220px;width:2px;height:20px;background:#f9fafb;border-radius:1px;"></div><div style="position:absolute;left:541px;top:220px;width:2px;height:20px;background:#f9fafb;border-radius:1px;"></div><div style="position:absolute;left:671px;top:220px;width:2px;height:20px;background:#f9fafb;border-radius:1px;"></div><div style="position:absolute;left:821px;top:220px;width:2px;height:20px;background:#f9fafb;border-radius:1px;"></div><div style="position:absolute;left:996px;top:220px;width:2px;height:20px;background:#f9fafb;border-radius:1px;"></div><div style="position:absolute;left:1171px;top:220px;width:2px;height:20px;background:#f9fafb;border-radius:1px;"></div><div style="position:absolute;left:1421px;top:220px;width:2px;height:20px;background:#f9fafb;border-radius:1px;"></div><div style="position:absolute;left:1581px;top:220px;width:2px;height:20px;background:#f9fafb;border-radius:1px;"></div><div style="position:absolute;left:226.00px;top:223.25px;font-size:16px;line-height:16px;white-space:nowrap;color:#1f2328;-webkit-text-stroke:0.45px #1f2328;">№</div><div style="position:absolute;left:306.60px;top:223.25px;font-size:16px;line-height:16px;white-space:nowrap;color:#1f2328;-webkit-text-stroke:0.45px #1f2328;letter-spacing:0.65px;">Имя</div><div style="position:absolute;left:557.60px;top:223.25px;font-size:16px;line-height:16px;white-space:nowrap;color:#1f2328;-webkit-text-stroke:0.45px #1f2328;letter-spacing:-0.171px;">Описание</div><div style="position:absolute;left:687.00px;top:223.25px;font-size:16px;line-height:16px;white-space:nowrap;color:#1f2328;-webkit-text-stroke:0.45px #1f2328;letter-spacing:-0.333px;">Зона</div><div style="position:absolute;left:837.00px;top:223.25px;font-size:16px;line-height:16px;white-space:nowrap;color:#1f2328;-webkit-text-stroke:0.45px #1f2328;letter-spacing:0.209px;">Дата запуска</div><div style="position:absolute;left:1013.20px;top:223.25px;font-size:16px;line-height:16px;white-space:nowrap;color:#1f2328;-webkit-text-stroke:0.45px #1f2328;letter-spacing:0.3px;">Дата остановки</div><div style="position:absolute;left:1187.40px;top:223.25px;font-size:16px;line-height:16px;white-space:nowrap;color:#1f2328;-webkit-text-stroke:0.45px #1f2328;letter-spacing:0.131px;">Найдено – текущая сессия</div><div style="position:absolute;left:1436.80px;top:223.25px;font-size:16px;line-height:16px;white-space:nowrap;color:#1f2328;-webkit-text-stroke:0.45px #1f2328;letter-spacing:0.1px;">Статус</div><div style="position:absolute;left:1596.20px;top:223.25px;font-size:16px;line-height:16px;white-space:nowrap;color:#1f2328;-webkit-text-stroke:0.45px #1f2328;">Отправлено – в</div><div style="position:absolute;left:829px;top:212.29999999999995px;width:164.2px;height:32.2px;border:1.5px solid #3f50b5;box-shadow:inset 0 0 0 1px rgba(255,255,255,0.75);"></div><svg style="position:absolute;left:966px;top:224px;" width="14" height="12" viewBox="0 0 14 12"><path d="M9.2 1.5 H13.1 M7.2 4.5 H13.1 M5.2 7.5 H13.1 M1 10.5 H13.1" stroke="#111" stroke-width="1.2" stroke-linecap="round"/></svg><div style="position:absolute;left:1712px;top:208px;width:160px;height:45px;background:#e3e6ed;border-radius:0 4px 4px 0;box-shadow:inset 0 -1px 0 #d8dbe1;"></div><div style="position:absolute;left:215px;top:301px;width:1646px;height:48px;background:#f8f9fb;"></div><div style="position:absolute;left:229.20px;top:269.45px;font-size:16px;line-height:16px;white-space:nowrap;color:#1f2328;">1</div><div style="position:absolute;left:308.60px;top:269.45px;font-size:16px;line-height:16px;white-space:nowrap;color:#1f2328;letter-spacing:0.254px;">сканирование библиотеки</div><div style="position:absolute;left:688.00px;top:269.45px;font-size:16px;line-height:16px;white-space:nowrap;color:#1f2328;letter-spacing:0.318px;">По умолчанию</div><div style="position:absolute;left:838.20px;top:269.45px;font-size:16px;line-height:16px;white-space:nowrap;color:#1f2328;letter-spacing:-0.011px;">16.02.2024 06:34:02</div><div style="position:absolute;left:1014.00px;top:269.45px;font-size:16px;line-height:16px;white-space:nowrap;color:#1f2328;letter-spacing:-0.09px;">16.02.2024 06:35:08</div><div style="position:absolute;left:1189.20px;top:269.45px;font-size:16px;line-height:16px;white-space:nowrap;color:#1f2328;letter-spacing:0.017px;">26 (41.55МБ)</div><div style="position:absolute;left:1438.9px;top:273.0px;width:8px;height:8px;border-radius:50%;background:#e8772a;"></div><div style="position:absolute;left:1451px;top:263px;width:121.79999999999995px;height:26px;overflow:hidden;"><div style="position:absolute;left:4.20px;top:6.45px;font-size:16px;line-height:16px;white-space:nowrap;color:#1f2328;letter-spacing:0.3px;">Ожидает запуск</div></div><div style="position:absolute;left:1599.00px;top:269.45px;font-size:16px;line-height:16px;white-space:nowrap;color:#1f2328;letter-spacing:0.091px;">26 (41.55МБ)</div><svg style="position:absolute;left:1725px;top:270.79999999999995px;" width="14" height="14" viewBox="0 0 14 14"><circle cx="7" cy="7" r="6.1" fill="none" stroke="#8a9099" stroke-width="1.3"/><path d="M5.4 4.2 L9.8 7 L5.4 9.8 Z" fill="#8a9099"/></svg><svg style="position:absolute;left:1761px;top:270.79999999999995px;" width="14" height="14" viewBox="0 0 14 14"><path d="M4 3.5 H2.2 V13 H8.4 V11.5" fill="none" stroke="#8a9099" stroke-width="1.3"/><path d="M4.6 1 H9.6 L12.2 3.6 V11 H4.6 Z" fill="none" stroke="#8a9099" stroke-width="1.3" stroke-linejoin="round"/></svg><svg style="position:absolute;left:1797px;top:270.79999999999995px;" width="14" height="14" viewBox="0 0 14 14"><path d="M5.38 2.91 L5.55 0.97 L8.45 0.97 L8.62 2.91 L9.13 3.30 L9.73 3.55 L11.50 2.73 L12.94 5.24 L11.35 6.36 L11.27 7.00 L11.35 7.64 L12.94 8.76 L11.50 11.27 L9.73 10.45 L9.13 10.70 L8.62 11.09 L8.45 13.03 L5.55 13.03 L5.38 11.09 L4.87 10.70 L4.27 10.45 L2.50 11.27 L1.06 8.76 L2.65 7.64 L2.73 7.00 L2.65 6.36 L1.06 5.24 L2.50 2.73 L4.27 3.55 L4.87 3.30 Z" fill="none" stroke="#8a9099" stroke-width="1.2" stroke-linejoin="round"/><circle cx="7" cy="7" r="1.9" fill="none" stroke="#8a9099" stroke-width="1.2"/></svg><svg style="position:absolute;left:1833px;top:270.79999999999995px;" width="14" height="14" viewBox="0 0 14 14"><path d="M1 2.6 H13 M5 2.6 V1 H9 V2.6" fill="none" stroke="#8a9099" stroke-width="1.3"/><path d="M2.5 2.8 L3.2 13 H10.8 L11.5 2.8" fill="none" stroke="#8a9099" stroke-width="1.3"/><path d="M5.7 5.5 V10.5 M8.3 5.5 V10.5" stroke="#8a9099" stroke-width="1.2"/></svg><div style="position:absolute;left:229.20px;top:317.45px;font-size:16px;line-height:16px;white-space:nowrap;color:#1f2328;">2</div><div style="position:absolute;left:308.60px;top:317.45px;font-size:16px;line-height:16px;white-space:nowrap;color:#1f2328;letter-spacing:-0.027px;">сетевая шара</div><div style="position:absolute;left:688.00px;top:317.45px;font-size:16px;line-height:16px;white-space:nowrap;color:#1f2328;letter-spacing:0.318px;">По умолчанию</div><div style="position:absolute;left:838.20px;top:317.45px;font-size:16px;line-height:16px;white-space:nowrap;color:#1f2328;letter-spacing:-0.011px;">16.02.2024 06:36:01</div><div style="position:absolute;left:1014.00px;top:317.45px;font-size:16px;line-height:16px;white-space:nowrap;color:#1f2328;letter-spacing:-0.09px;">16.02.2024 06:37:09</div><div style="position:absolute;left:1188.60px;top:317.45px;font-size:16px;line-height:16px;white-space:nowrap;color:#1f2328;letter-spacing:0.036px;">26 (41.55МБ)</div><div style="position:absolute;left:1438.9px;top:321.0px;width:8px;height:8px;border-radius:50%;background:#e8772a;"></div><div style="position:absolute;left:1451px;top:311px;width:121.79999999999995px;height:26px;overflow:hidden;"><div style="position:absolute;left:4.20px;top:6.45px;font-size:16px;line-height:16px;white-space:nowrap;color:#1f2328;letter-spacing:0.3px;">Ожидает запуск</div></div><div style="position:absolute;left:1599.00px;top:317.45px;font-size:16px;line-height:16px;white-space:nowrap;color:#1f2328;letter-spacing:0.091px;">26 (41.55МБ)</div><svg style="position:absolute;left:1725px;top:318.79999999999995px;" width="14" height="14" viewBox="0 0 14 14"><circle cx="7" cy="7" r="6.1" fill="none" stroke="#8a9099" stroke-width="1.3"/><path d="M5.4 4.2 L9.8 7 L5.4 9.8 Z" fill="#8a9099"/></svg><svg style="position:absolute;left:1761px;top:318.79999999999995px;" width="14" height="14" viewBox="0 0 14 14"><path d="M4 3.5 H2.2 V13 H8.4 V11.5" fill="none" stroke="#8a9099" stroke-width="1.3"/><path d="M4.6 1 H9.6 L12.2 3.6 V11 H4.6 Z" fill="none" stroke="#8a9099" stroke-width="1.3" stroke-linejoin="round"/></svg><svg style="position:absolute;left:1797px;top:318.79999999999995px;" width="14" height="14" viewBox="0 0 14 14"><path d="M5.38 2.91 L5.55 0.97 L8.45 0.97 L8.62 2.91 L9.13 3.30 L9.73 3.55 L11.50 2.73 L12.94 5.24 L11.35 6.36 L11.27 7.00 L11.35 7.64 L12.94 8.76 L11.50 11.27 L9.73 10.45 L9.13 10.70 L8.62 11.09 L8.45 13.03 L5.55 13.03 L5.38 11.09 L4.87 10.70 L4.27 10.45 L2.50 11.27 L1.06 8.76 L2.65 7.64 L2.73 7.00 L2.65 6.36 L1.06 5.24 L2.50 2.73 L4.27 3.55 L4.87 3.30 Z" fill="none" stroke="#8a9099" stroke-width="1.2" stroke-linejoin="round"/><circle cx="7" cy="7" r="1.9" fill="none" stroke="#8a9099" stroke-width="1.2"/></svg><svg style="position:absolute;left:1833px;top:318.79999999999995px;" width="14" height="14" viewBox="0 0 14 14"><path d="M1 2.6 H13 M5 2.6 V1 H9 V2.6" fill="none" stroke="#8a9099" stroke-width="1.3"/><path d="M2.5 2.8 L3.2 13 H10.8 L11.5 2.8" fill="none" stroke="#8a9099" stroke-width="1.3"/><path d="M5.7 5.5 V10.5 M8.3 5.5 V10.5" stroke="#8a9099" stroke-width="1.2"/></svg><div style="position:absolute;left:229.20px;top:365.45px;font-size:16px;line-height:16px;white-space:nowrap;color:#1f2328;">3</div><div style="position:absolute;left:308.60px;top:365.45px;font-size:16px;line-height:16px;white-space:nowrap;color:#1f2328;letter-spacing:0.158px;">рабочие станции</div><div style="position:absolute;left:688.00px;top:365.45px;font-size:16px;line-height:16px;white-space:nowrap;color:#1f2328;letter-spacing:0.318px;">По умолчанию</div><div style="position:absolute;left:838.20px;top:365.45px;font-size:16px;line-height:16px;white-space:nowrap;color:#1f2328;letter-spacing:-0.011px;">16.02.2024 06:37:19</div><div style="position:absolute;left:1014.00px;top:365.45px;font-size:16px;line-height:16px;white-space:nowrap;color:#1f2328;letter-spacing:-0.09px;">16.02.2024 06:38:08</div><div style="position:absolute;left:1188.60px;top:365.45px;font-size:16px;line-height:16px;white-space:nowrap;color:#1f2328;letter-spacing:0.036px;">26 (41.55МБ)</div><div style="position:absolute;left:1438.9px;top:369.0px;width:8px;height:8px;border-radius:50%;background:#0f8a3c;"></div><div style="position:absolute;left:1451px;top:359px;width:121.79999999999995px;height:26px;overflow:hidden;"><div style="position:absolute;left:4.20px;top:6.45px;font-size:16px;line-height:16px;white-space:nowrap;color:#1f2328;letter-spacing:0.1px;">Завершена</div></div><div style="position:absolute;left:1599.00px;top:365.45px;font-size:16px;line-height:16px;white-space:nowrap;color:#1f2328;letter-spacing:0.091px;">26 (41.55МБ)</div><svg style="position:absolute;left:1725px;top:366.79999999999995px;" width="14" height="14" viewBox="0 0 14 14"><circle cx="7" cy="7" r="6.1" fill="none" stroke="#8a9099" stroke-width="1.3"/><path d="M5.4 4.2 L9.8 7 L5.4 9.8 Z" fill="#8a9099"/></svg><svg style="position:absolute;left:1761px;top:366.79999999999995px;" width="14" height="14" viewBox="0 0 14 14"><path d="M4 3.5 H2.2 V13 H8.4 V11.5" fill="none" stroke="#8a9099" stroke-width="1.3"/><path d="M4.6 1 H9.6 L12.2 3.6 V11 H4.6 Z" fill="none" stroke="#8a9099" stroke-width="1.3" stroke-linejoin="round"/></svg><svg style="position:absolute;left:1797px;top:366.79999999999995px;" width="14" height="14" viewBox="0 0 14 14"><path d="M5.38 2.91 L5.55 0.97 L8.45 0.97 L8.62 2.91 L9.13 3.30 L9.73 3.55 L11.50 2.73 L12.94 5.24 L11.35 6.36 L11.27 7.00 L11.35 7.64 L12.94 8.76 L11.50 11.27 L9.73 10.45 L9.13 10.70 L8.62 11.09 L8.45 13.03 L5.55 13.03 L5.38 11.09 L4.87 10.70 L4.27 10.45 L2.50 11.27 L1.06 8.76 L2.65 7.64 L2.73 7.00 L2.65 6.36 L1.06 5.24 L2.50 2.73 L4.27 3.55 L4.87 3.30 Z" fill="none" stroke="#8a9099" stroke-width="1.2" stroke-linejoin="round"/><circle cx="7" cy="7" r="1.9" fill="none" stroke="#8a9099" stroke-width="1.2"/></svg><svg style="position:absolute;left:1833px;top:366.79999999999995px;" width="14" height="14" viewBox="0 0 14 14"><path d="M1 2.6 H13 M5 2.6 V1 H9 V2.6" fill="none" stroke="#8a9099" stroke-width="1.3"/><path d="M2.5 2.8 L3.2 13 H10.8 L11.5 2.8" fill="none" stroke="#8a9099" stroke-width="1.3"/><path d="M5.7 5.5 V10.5 M8.3 5.5 V10.5" stroke="#8a9099" stroke-width="1.2"/></svg><div style="position:absolute;left:1712px;top:208px;width:1px;height:182px;background:#c9c9c9;"></div><div style="position:absolute;left:1863px;top:255px;width:8px;height:150px;background:#e3e6ed;border-radius:4px;"></div></div>
</body></html>
